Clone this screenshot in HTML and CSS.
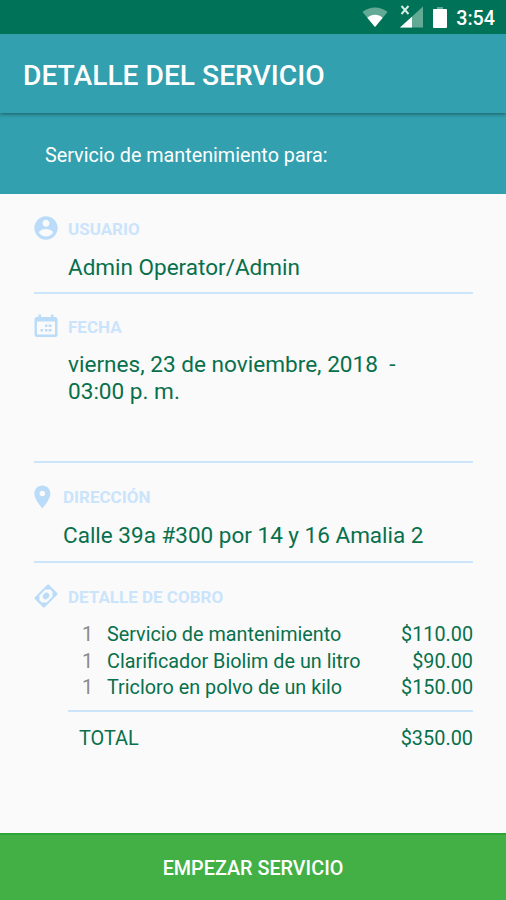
FILE: index.html
```html
<!DOCTYPE html>
<html lang="es">
<head>
<meta charset="utf-8">
<title>Detalle del servicio</title>
<link rel="stylesheet" href="styles.css">
</head>
<body>
<div class="status">
  <svg class="wifi" width="26" height="20" viewBox="0 0 26 20"><path d="M13 20 0.500 5C7.500-1 18.500-1 25.500 5Z" fill="#62aa94"/><path d="M13 20 5.300 10.700C9.500 6.800 16.500 6.800 20.700 10.700Z" fill="#fff"/></svg>
  <svg class="signal" width="24" height="24" viewBox="0 0 24 24"><path d="M0 23.500 23 2.500V23.500Z" fill="#62aa94"/><path d="M0 23.500 12 12.700V23.500Z" fill="#fff"/><path d="M1.500 2 8.500 10M8.500 2 1.500 10" stroke="#d9eee7" stroke-width="1.900"/></svg>
  <svg class="battery" width="14" height="21" viewBox="0 0 14 21"><path d="M4 0H10V3H4Z" fill="#62aa94"/><path d="M1 2H13Q14 2 14 3V20Q14 21 13 21H1Q0 21 0 20V3Q0 2 1 2Z" fill="#fff"/></svg>
  <span class="clock">3:54</span>
</div>
<header class="appbar"><h1>DETALLE DEL SERVICIO</h1></header>
<div class="banner">Servicio de mantenimiento para:</div>
<main>
  <section class="field user">
    <h2><svg width="28" height="28" viewBox="0 0 24 24"><path d="M12 2C6.480 2 2 6.480 2 12s4.480 10 10 10 10-4.480 10-10S17.520 2 12 2zm0 3c1.660 0 3 1.340 3 3s-1.340 3-3 3-3-1.340-3-3 1.340-3 3-3zm0 14.200c-2.500 0-4.710-1.280-6-3.220.03-1.990 4-3.080 6-3.080 1.990 0 5.970 1.090 6 3.080-1.290 1.940-3.500 3.220-6 3.220z"/></svg><span>USUARIO</span></h2>
    <p>Admin Operator/Admin</p>
  </section>
  <section class="field date">
    <h2><svg width="28" height="28" viewBox="0 0 28 28"><path fill-rule="evenodd" d="M6.500 2.500H9V5H19V2.500H21.500V5H23Q25.500 5 25.500 7.500V22.500Q25.500 25 23 25H5Q2.500 25 2.500 22.500V7.500Q2.500 5 5 5H6.500ZM5 9.500V22.500H23V9.500Z"/><path d="M13 12.500h2.500v2.500h-2.500zM16.500 12.500h3v2.500h-3zM8.500 17h2.500v2.500H8.500zM13 17h2.500v2.500h-2.500zM16.500 17h3v2.500h-3z"/></svg><span>FECHA</span></h2>
    <p>viernes, 23 de noviembre, 2018 &nbsp;-<br>03:00 p. m.</p>
  </section>
  <section class="field address">
    <h2><svg width="23" height="28" viewBox="3 0 20 24"><path d="M12 2C8.130 2 5 5.130 5 9c0 5.250 7 13 7 13s7-7.750 7-13c0-3.870-3.130-7-7-7zm0 9.400a2.400 2.400 0 1 1 0-4.800 2.400 2.400 0 0 1 0 4.800z"/></svg><span>DIRECCIÓN</span></h2>
    <p>Calle 39a #300 por 14 y 16 Amalia 2</p>
  </section>
  <section class="field charges">
    <h2><svg width="28" height="28" viewBox="0 0 28 28"><g transform="rotate(-45 14 14)"><path fill-rule="evenodd" d="M5.200 7H22.800Q24 7 24 8.200V19.800Q24 21 22.800 21H5.200Q4 21 4 19.800V8.200Q4 7 5.200 7ZM9.500 9Q8.500 11 6.500 12V16Q8.500 17 9.500 19H18.500Q19.500 17 21.500 16V12Q19.500 11 18.500 9Z"/><ellipse cx="14" cy="14" rx="3.500" ry="3"/></g></svg><span>DETALLE DE COBRO</span></h2>
    <ul>
      <li><span class="qty">1</span><span>Servicio de mantenimiento</span><span class="price">$110.00</span></li>
      <li><span class="qty">1</span><span>Clarificador Biolim de un litro</span><span class="price">$90.00</span></li>
      <li><span class="qty">1</span><span>Tricloro en polvo de un kilo</span><span class="price">$150.00</span></li>
    </ul>
    <div class="total"><span>TOTAL</span><span>$350.00</span></div>
  </section>
</main>
<button class="start">EMPEZAR SERVICIO</button>
</body>
</html>
```
FILE: styles.css
```css
* { box-sizing: border-box; margin: 0; padding: 0; }
body {
  display: flex;
  flex-direction: column;
  height: 900px;
  overflow: hidden;
  background: #fafafa;
  color: #08704c;
  font-family: Roboto, sans-serif;
}
.status {
  display: flex;
  align-items: flex-end;
  height: 34px;
  padding: 0 11px 6px 0;
  justify-content: flex-end;
  background: #007257;
  color: #fff;
}
.wifi { margin-bottom: 1px; }
.signal { margin-left: 12px; }
.battery { margin-left: 9px; }
.clock {
  margin: 0 0 -1px 9px;
  font-size: 19.700px;
  font-weight: 500;
  line-height: 20px;
}
.appbar {
  display: flex;
  align-items: center;
  height: 79px;
  padding: 3px 23px 0;
  background: #32a0ae;
  color: #fff;
  box-shadow: 0 1px 4px rgba(0, 0, 0, .45);
  clip-path: inset(0 0 -6px 0);
  z-index: 1;
}
h1 { font-size: 28.200px; font-weight: 500; white-space: nowrap; }
.banner {
  display: flex;
  align-items: center;
  height: 81px;
  padding: 3px 45px 0;
  background: #32a0ae;
  color: #fff;
  font-size: 19.750px;
}
main { flex: 1; padding: 0 33px 0 34px; }
.field { border-bottom: 2px solid #cde5fa; }
h2 {
  display: flex;
  align-items: center;
  height: 28px;
  color: #cae4fc;
  font-size: 17px;
  font-weight: 700;
}
h2 svg { margin-left: -2px; margin-right: 8px; fill: #badcf9; }
.charges h2 span { padding-top: 1px; }
.field p { margin-top: 11px; padding-left: 34px; font-size: 22.500px; line-height: 27px; white-space: nowrap; }
.user { height: 100px; padding-top: 20px; }
.user p { margin-top: 12px; }
.date { height: 169px; padding-top: 18px; }
.date p { font-size: 22.600px; }
.address { height: 100px; padding-top: 20px; }
.address p { padding-left: 29px; }
.user h2 span, .date h2 span { padding-top: 1px; }
.charges { padding-top: 19px; border: 0; }
ul { margin: 10px 0 0 34px; padding-top: 1px; height: 92px; border-bottom: 2px solid #cde5fa; list-style: none; }
li { display: flex; height: 26.700px; line-height: 27px; font-size: 19.800px; white-space: nowrap; }
.qty { width: 39px; padding-left: 14px; color: #8b8b8b; }
.price { margin-left: auto; }
.total {
  display: flex;
  justify-content: space-between;
  margin: 13px 0 0 34px;
  padding-left: 11px;
  font-size: 19.900px;
  line-height: 28px;
}
.start {
  height: 67px;
  padding-top: 1px;
  border: 0;
  border-top: 2px solid #2ea637;
  background: #43b045;
  color: #fff;
  font: 500 19.800px Roboto, sans-serif;
}
```
